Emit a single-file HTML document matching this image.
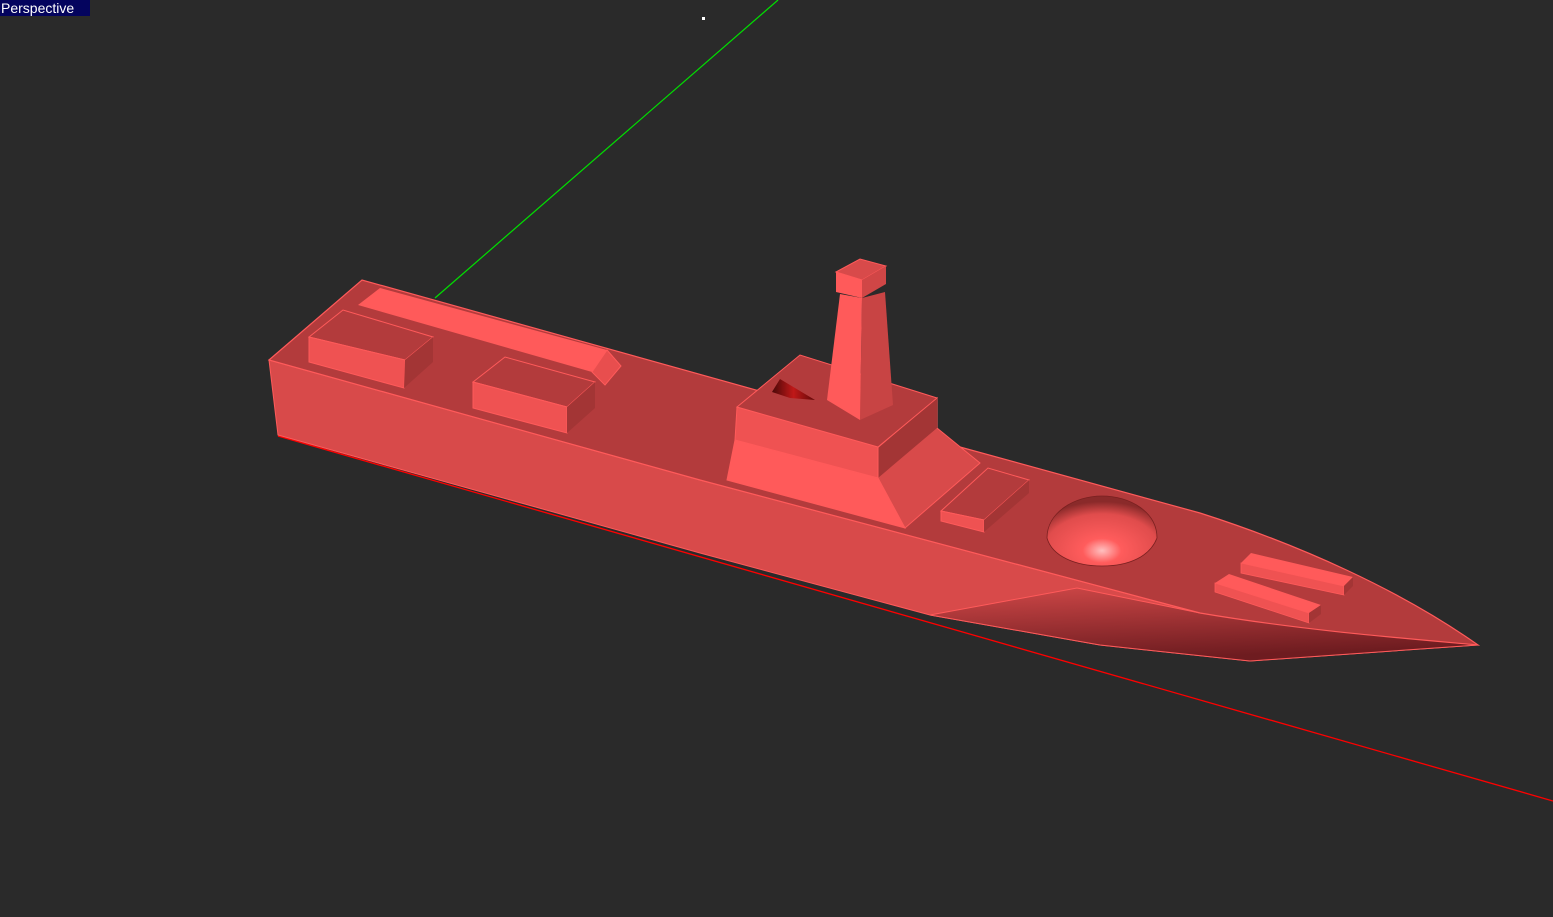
<!DOCTYPE html>
<html><head><style>
html,body{margin:0;padding:0;background:#2a2a2a;width:1553px;height:917px;overflow:hidden}
.lbl{position:absolute;left:0;top:0;width:90px;height:16px;background:#04045e;color:#fff;font:14px "Liberation Sans",sans-serif;line-height:16px;padding-left:1px;box-sizing:border-box}
svg{position:absolute;left:0;top:0}
</style></head><body>
<svg width="1553" height="917" viewBox="0 0 1553 917">
<defs>
<linearGradient id="bow" x1="0" y1="0" x2="0.3" y2="1">
<stop offset="0" stop-color="#d04848"/><stop offset="1" stop-color="#6e1c20"/>
</linearGradient>
<radialGradient id="dome" cx="0.5" cy="0.78" r="0.7">
<stop offset="0" stop-color="#ffc0c0"/><stop offset="0.25" stop-color="#ff5c5c"/><stop offset="0.75" stop-color="#e04c4c"/><stop offset="1" stop-color="#8a2a2a"/>
</radialGradient>
<linearGradient id="cone" x1="0" y1="0" x2="1" y2="0">
<stop offset="0" stop-color="#4a0808"/><stop offset="0.5" stop-color="#c01818"/><stop offset="1" stop-color="#600808"/>
</linearGradient>
</defs>
<line x1="435" y1="298" x2="778" y2="0" stroke="#00e000" stroke-width="1.2"/>
<rect x="702" y="17" width="3" height="3" fill="#fff"/>
<line x1="278" y1="436" x2="1553" y2="801" stroke="#ff0000" stroke-width="1.3"/>
<polygon points="269,360 700,480 1200,613 1478,645 1250,661 1100,645 930,615 700,553 278,435" fill="#d84a4a" stroke="#ff5a5a" stroke-width="1"/>
<polygon points="930,615 1077,588 1200,613 1478,645 1250,661 1100,645" fill="url(#bow)" stroke="#ff5a5a" stroke-width="1"/>
<path d="M269,360 L362,280 L960,447 L1200,513 C1300,545 1400,590 1478,645 C1400,638 1300,630 1200,613 L700,480 Z" fill="#b33b3c" stroke="#ff5a5a" stroke-width="1.2"/>
<polygon points="358,305 380,288 607,350 592,372" fill="#ff5a5a"/>
<polygon points="592,372 607,350 621,366 605,385" fill="#e84e4e" stroke="#ff5a5a" stroke-width="1"/>
<polygon points="309,337 343,310 433,337 405,360" fill="#b33b3c" stroke="#ff5a5a"/>
<polygon points="309,337 405,360 404,388 309,362" fill="#ef5252" stroke="#ff5a5a"/>
<polygon points="405,360 433,337 433,362 404,388" fill="#a33535"/>
<polygon points="473,382 505,357 595,382 567,407" fill="#b33b3c" stroke="#ff5a5a"/>
<polygon points="473,382 567,407 567,433 473,408" fill="#ef5252" stroke="#ff5a5a"/>
<polygon points="567,407 595,382 595,408 567,433" fill="#a33535"/>
<polygon points="735,440 878,478 905,528 727,480" fill="#ff5a5a" stroke="#ff5a5a"/>
<polygon points="878,448 937,398 937,428 980,463 905,528 878,478" fill="#d84a4a" stroke="#ff5a5a"/>
<polygon points="878,448 937,398 937,428 878,478" fill="#a33535"/>
<polygon points="737,407 878,447 878,478 735,440" fill="#ef5252" stroke="#ff5a5a"/>
<polygon points="737,407 800,355 937,398 878,447" fill="#b33b3c" stroke="#ff5a5a"/>
<polygon points="772,392 780,379 815,400 790,398" fill="url(#cone)"/>
<polygon points="860,420 893,405 885,292 862,298" fill="#c84444"/>
<polygon points="827,400 860,420 862,298 840,294" fill="#ff5a5a"/>
<polygon points="836,272 860,259 886,266 862,280" fill="#d84a4a" stroke="#ff5a5a"/>
<polygon points="836,272 862,280 862,298 836,292" fill="#ff5a5a"/>
<polygon points="862,280 886,266 886,284 862,298" fill="#d04646"/>
<polygon points="941,511 988,468 1029,480 984,520" fill="#b33b3c" stroke="#ff5a5a"/>
<polygon points="941,511 984,520 984,532 941,521" fill="#ef5252" stroke="#ff5a5a"/>
<polygon points="984,520 1029,480 1029,493 984,532" fill="#a33535"/>
<path d="M1047,538 C1047,512 1075,496 1102,496 C1130,496 1157,512 1157,538 C1150,556 1130,566 1102,566 C1075,566 1052,556 1047,538 Z" fill="url(#dome)" stroke="#7a2020" stroke-width="0.8"/>
<polygon points="1241,563 1251,553 1353,577 1344,586" fill="#ff5a5a"/>
<polygon points="1241,563 1344,586 1344,595 1241,573" fill="#ef5252" stroke="#ff5a5a" stroke-width="0.8"/>
<polygon points="1344,586 1353,577 1353,586 1344,595" fill="#a33535"/>
<polygon points="1215,583 1229,574 1321,605 1309,613" fill="#ff5a5a"/>
<polygon points="1215,583 1309,613 1309,623 1215,592" fill="#ef5252" stroke="#ff5a5a" stroke-width="0.8"/>
<polygon points="1309,613 1321,605 1321,614 1309,623" fill="#a33535"/>
</svg>
<div class="lbl">Perspective</div>
</body></html>
